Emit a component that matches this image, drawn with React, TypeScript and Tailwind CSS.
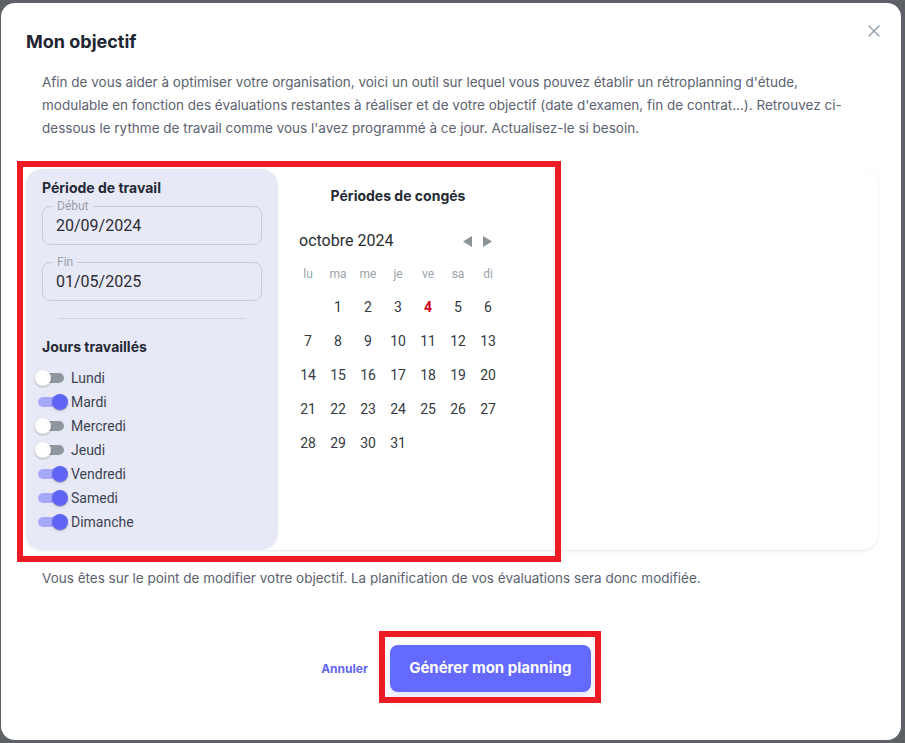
import { X } from "lucide-react";

const jours = [
  { label: "Lundi", on: false },
  { label: "Mardi", on: true },
  { label: "Mercredi", on: false },
  { label: "Jeudi", on: false },
  { label: "Vendredi", on: true },
  { label: "Samedi", on: true },
  { label: "Dimanche", on: true },
];

const weekdays = ["lu", "ma", "me", "je", "ve", "sa", "di"];

// octobre 2024 starts on a Tuesday
const cells: (number | null)[] = [null, ...Array.from({ length: 31 }, (_, i) => i + 1)];
const weeks: (number | null)[][] = [];
for (let i = 0; i < cells.length; i += 7) weeks.push(cells.slice(i, i + 7));

function Toggle({ on }: { on: boolean }) {
  return (
    <span className="relative flex h-[16px] w-[33px] shrink-0 items-center">
      <span
        className={
          on
            ? "ml-[3px] h-[10px] w-[26px] rounded-full bg-[#a5a8fb]"
            : "ml-[3px] h-[10px] w-[26px] rounded-full bg-[#8e979e]"
        }
      />
      <span
        className={
          on
            ? "absolute left-[17px] top-0 h-[16px] w-[16px] rounded-full bg-[#5f63f6] shadow-[0_1px_2px_rgba(0,0,0,0.25)]"
            : "absolute left-0 top-0 h-[16px] w-[16px] rounded-full bg-white shadow-[0_1px_2px_rgba(0,0,0,0.25)]"
        }
      />
    </span>
  );
}

function DateField({ label, value }: { label: string; value: string }) {
  return (
    <div className="relative flex h-[39px] w-[220px] items-center rounded-[8px] border border-[#c9ccdb] px-[13px]">
      <span className="absolute -top-[8px] left-[10px] bg-[#e8e9f7] px-[4px] font-['Roboto',sans-serif] text-[12px] leading-[14px] text-[#9aa0aa]">
        {label}
      </span>
      <span className="font-['Roboto',sans-serif] text-[16px] text-[#2b2d33]">{value}</span>
    </div>
  );
}

export default function App() {
  return (
    <div className="h-[743px] w-[905px] overflow-hidden bg-[#5d6166] pl-[1px] pt-[3px] font-['Inter',sans-serif]">
      <div className="relative flex h-[737px] w-[900px] flex-col rounded-[14px] bg-white px-[25px] pt-[26px]">
        <div className="flex items-start justify-between">
          <h2 className="text-[18px] font-bold leading-[26px] text-[#1e2430]">Mon objectif</h2>
          <X className="mr-[-8px] mt-[-8px] h-[20px] w-[20px] text-[#94a0ae]" strokeWidth={1.6} />
        </div>

        <p className="mt-[16px] w-[832px] pl-[16px] text-[13.5px] leading-[23px] text-[#5b6270]">
          Afin de vous aider à optimiser votre organisation, voici un outil sur lequel vous pouvez établir un
          rétroplanning d'étude, modulable en fonction des évaluations restantes à réaliser et de votre objectif (date
          d'examen, fin de contrat...). Retrouvez ci-dessous le rythme de travail comme vous l'avez programmé à ce jour.
          Actualisez-le si besoin.
        </p>

        <div className="mt-[29px] flex h-[381px] w-[852px] rounded-[16px] bg-white shadow-[0_1px_3px_rgba(30,40,80,0.12)]">
          <div className="flex w-[252px] flex-col rounded-[16px] bg-[#e8e9f7] pt-[10px]">
            <h3 className="pl-[16px] text-[14px] font-bold leading-[18px] text-[#252a35]">Période de travail</h3>
            <div className="mt-[9px] flex flex-col gap-[17px] pl-[16px]">
              <DateField label="Début" value="20/09/2024" />
              <DateField label="Fin" value="01/05/2025" />
            </div>
            <div className="ml-[32px] mt-[17px] h-px w-[188px] bg-[#cfd2e2]" />
            <h3 className="mt-[19px] pl-[16px] text-[14px] font-bold leading-[18px] text-[#252a35]">
              Jours travaillés
            </h3>
            <ul className="mt-[10px] flex flex-col pl-[9px]">
              {jours.map((j) => (
                <li key={j.label} className="flex h-[24px] items-center gap-[3px]">
                  <Toggle on={j.on} />
                  <span className="font-['Roboto',sans-serif] text-[14px] text-[#3d4350]">{j.label}</span>
                </li>
              ))}
            </ul>
          </div>

          <div className="flex w-[240px] flex-col pl-[15px] pt-[18px]">
            <h3 className="w-[210px] text-center text-[14px] font-bold leading-[18px] text-[#252a35]">
              Périodes de congés
            </h3>
            <div className="mt-[25px] flex h-[22px] w-[210px] items-center justify-between pl-[6px]">
              <span className="font-['Roboto',sans-serif] text-[16px] text-[#2b2d33]">octobre 2024</span>
              <span className="mr-[11px] flex items-center gap-[11px]">
                <svg width="9" height="11" viewBox="0 0 9 11">
                  <path d="M9 0 L0 5.5 L9 11 Z" fill="#8a9497" />
                </svg>
                <svg width="9" height="11" viewBox="0 0 9 11">
                  <path d="M0 0 L9 5.5 L0 11 Z" fill="#8a9497" />
                </svg>
              </span>
            </div>
            <div className="mt-[11px] grid w-[210px] grid-cols-7 font-['Roboto',sans-serif]">
              {weekdays.map((d) => (
                <span key={d} className="flex h-[22px] items-center justify-center text-[12px] text-[#9aa3a8]">
                  {d}
                </span>
              ))}
            </div>
            <div className="mt-[5px] flex w-[210px] flex-col font-['Roboto',sans-serif]">
              {weeks.map((w, wi) => (
                <div key={wi} className="grid h-[34px] grid-cols-7">
                  {Array.from({ length: 7 }, (_, i) => w[i] ?? null).map((d, i) => (
                    <span
                      key={i}
                      className={
                        d === 4
                          ? "flex items-center justify-center text-[14px] font-bold text-[#d0021b]"
                          : "flex items-center justify-center text-[14px] text-[#353a44]"
                      }
                    >
                      {d ?? ""}
                    </span>
                  ))}
                </div>
              ))}
            </div>
          </div>
        </div>

        <p className="mt-[19px] pl-[16px] text-[13.5px] leading-[18px] text-[#5b6270]">
          Vous êtes sur le point de modifier votre objectif. La planification de vos évaluations sera donc modifiée.
        </p>

        <div className="mt-[58px] flex items-center justify-center gap-[22px] pl-[10px]">
          <button className="text-[12px] font-bold text-[#6366f1]">Annuler</button>
          <button className="h-[47px] w-[201px] rounded-[8px] bg-[#6469ff] text-[15px] font-bold text-white shadow-[0_6px_14px_rgba(100,105,255,0.2)]">
            Générer mon planning
          </button>
        </div>

        {/* annotation boxes */}
        <div className="pointer-events-none absolute left-[16px] top-[158px] h-[401px] w-[544px] border-[6px] border-[#ed1c24]" />
        <div className="pointer-events-none absolute left-[378px] top-[628px] h-[72px] w-[222px] border-[6px] border-[#ed1c24]" />
      </div>
    </div>
  );
}
